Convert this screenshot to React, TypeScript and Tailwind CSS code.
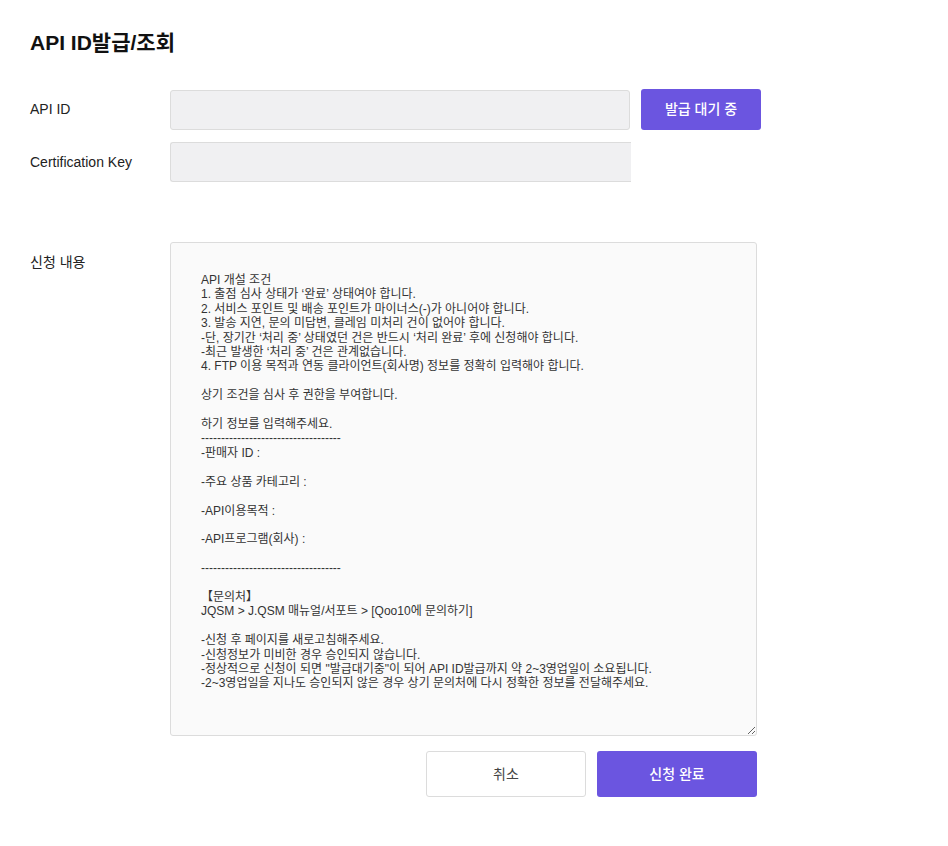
import React from "react";

const guide = `API 개설 조건
1. 출점 심사 상태가 ‘완료’ 상태여야 합니다.
2. 서비스 포인트 및 배송 포인트가 마이너스(-)가 아니어야 합니다.
3. 발송 지연, 문의 미답변, 클레임 미처리 건이 없어야 합니다.
-단, 장기간 ‘처리 중’ 상태였던 건은 반드시 ‘처리 완료’ 후에 신청해야 합니다.
-최근 발생한 ‘처리 중’ 건은 관계없습니다.
4. FTP 이용 목적과 연동 클라이언트(회사명) 정보를 정확히 입력해야 합니다.

상기 조건을 심사 후 권한을 부여합니다.

하기 정보를 입력해주세요.
-----------------------------------
-판매자 ID :

-주요 상품 카테고리 :

-API이용목적 :

-API프로그램(회사) :

-----------------------------------

【문의처】
JQSM > J.QSM 매뉴얼/서포트 > [Qoo10에 문의하기]

-신청 후 페이지를 새로고침해주세요.
-신청정보가 미비한 경우 승인되지 않습니다.
-정상적으로 신청이 되면 "발급대기중"이 되어 API ID발급까지 약 2~3영업일이 소요됩니다.
-2~3영업일을 지나도 승인되지 않은 경우 상기 문의처에 다시 정확한 정보를 전달해주세요.`;

export default function App() {
  return (
    <div
      className="min-h-screen bg-white px-[30px] pt-[28px] text-[#222]"
      style={{ fontFamily: '"Liberation Sans", "Noto Sans CJK KR", sans-serif' }}
    >
      <h1 className="text-[21px] font-bold leading-[30px] text-[#111]">API ID발급/조회</h1>

      <div className="mt-[31px] flex w-[731px] flex-col">
        {/* API ID */}
        <div className="flex items-center">
          <label className="w-[140px] text-[14px]">API ID</label>
          <input
            readOnly
            className="h-[40px] w-[460px] rounded-[3px] border border-[#dcdcdc] bg-[#f0f0f2] px-3 text-[14px] outline-none"
          />
          <button className="ml-[11px] h-[41px] w-[120px] rounded-[3px] bg-[#6b55e0] text-[14px] font-medium text-white">
            발급 대기 중
          </button>
        </div>

        {/* Certification Key */}
        <div className="mt-[12px] flex items-center">
          <label className="w-[140px] text-[14px]">Certification Key</label>
          <input
            readOnly
            className="h-[40px] w-[461px] rounded-l-[3px] border border-r-0 border-[#dcdcdc] bg-[#f0f0f2] px-3 text-[14px] outline-none"
          />
        </div>

        {/* 신청 내용 */}
        <div className="mt-[60px] flex items-start">
          <label className="w-[140px] pt-[10px] text-[14px]">신청 내용</label>
          <textarea
            readOnly
            defaultValue={guide}
            className="h-[494px] w-[587px] resize rounded-[3px] border border-[#dcdcdc] bg-[#fafafa] pl-[30px] pr-3 pt-[30px] text-[12px] leading-[14.4px] text-[#333] outline-none"
          />
        </div>

        <div className="mt-[15px] flex w-[727px] justify-end gap-[11px]">
          <button className="h-[46px] w-[160px] rounded-[3px] border border-[#dcdcdc] bg-white text-[14px] text-[#444]">
            취소
          </button>
          <button className="h-[46px] w-[160px] rounded-[3px] bg-[#6b55e0] text-[14px] font-medium text-white">
            신청 완료
          </button>
        </div>
      </div>
    </div>
  );
}
